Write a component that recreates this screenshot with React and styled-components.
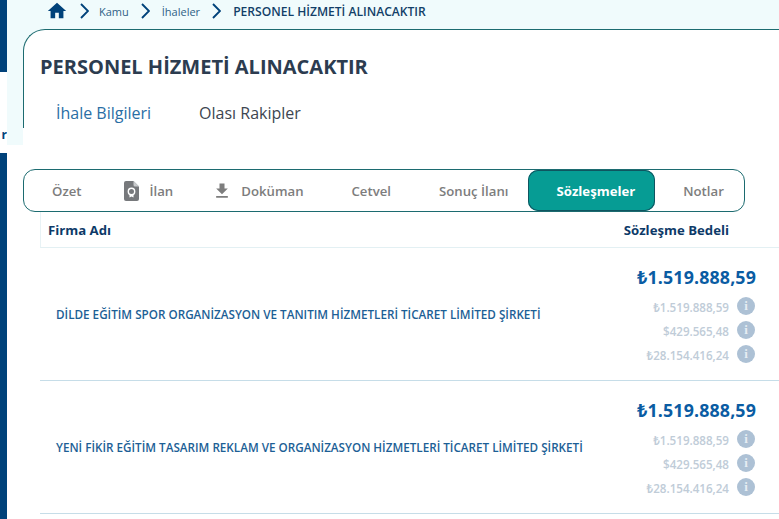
import React from 'react'
import styled, { createGlobalStyle } from 'styled-components'
import { MdFileDownload, MdHome } from 'react-icons/md'

const navy = '#00427a'
const pale = '#f0fbfc'
const teal = '#1c6b70'

const rows = [
  {
    name: 'DİLDE EĞİTİM SPOR ORGANİZASYON VE TANITIM HİZMETLERİ TİCARET LİMİTED ŞİRKETİ',
  },
  {
    name: 'YENİ FİKİR EĞİTİM TASARIM REKLAM VE ORGANİZASYON HİZMETLERİ TİCARET LİMİTED ŞİRKETİ',
  },
]

const prices = ['₺1.519.888,59', '$429.565,48', '₺28.154.416,24']

const DocIcon = () => (
  <svg width="15" height="20" viewBox="0 0 15 20">
    <path
      d="M2 0h7.5L15 5.5V18a2 2 0 0 1-2 2H2a2 2 0 0 1-2-2V2a2 2 0 0 1 2-2z"
      fill="#77797c"
    />
    <path d="M9.5 0v4a1.5 1.5 0 0 0 1.5 1.5h4z" fill="#c9cbcd" />
    <circle cx="7.5" cy="10.5" r="3.2" fill="none" stroke="#fff" strokeWidth="1.4" />
    <path d="M5.5 13.5v3l2-1 2 1v-3" fill="#fff" />
  </svg>
)

const ChevronIcon = ({ wide }) => (
  <Chevron wide={wide} width="9" height="16" viewBox="0 0 9 16">
    <path d="M1 1l7 7-7 7" fill="none" stroke={navy} strokeWidth="1.9" />
  </Chevron>
)

const InfoIcon = () => (
  <InfoBadge>
    <span>i</span>
  </InfoBadge>
)

export default function App() {
  return (
    <Page>
      <GlobalStyle />
      <Sidebar>
        <SideBlock size="72px" />
        <SideGap>r</SideGap>
        <SideBlock size="366px" />
      </Sidebar>
      <Main>
        <Breadcrumb>
          <HomeLink>
            <MdHome size={22} />
          </HomeLink>
          <ChevronIcon />
          <Crumb>Kamu</Crumb>
          <ChevronIcon wide />
          <Crumb>İhaleler</Crumb>
          <ChevronIcon wide />
          <Crumb current>PERSONEL HİZMETİ ALINACAKTIR</Crumb>
        </Breadcrumb>
        <Shell>
          <Gutter />
          <Panel>
            <HeadBack>
              <Head>
                <Title>PERSONEL HİZMETİ ALINACAKTIR</Title>
                <Tabs>
                  <Tab active>İhale Bilgileri</Tab>
                  <Tab>Olası Rakipler</Tab>
                </Tabs>
              </Head>
            </HeadBack>
            <SegmentBar>
              <Segment>Özet</Segment>
              <Segment lead={22} gap={11}>
                <DocIcon />
                İlan
              </Segment>
              <Segment lead={19} gap={9}>
                <MdFileDownload size={20} />
                Doküman
              </Segment>
              <Segment>Cetvel</Segment>
              <Segment>Sonuç İlanı</Segment>
              <Segment active>Sözleşmeler</Segment>
              <Segment>Notlar</Segment>
            </SegmentBar>
            <Table>
              <TableHead>
                <span>Firma Adı</span>
                <span>Sözleşme Bedeli</span>
              </TableHead>
              {rows.map(row => (
                <Row key={row.name}>
                  <FirmName>{row.name}</FirmName>
                  <Amounts>
                    <BigAmount>₺1.519.888,59</BigAmount>
                    {prices.map(price => (
                      <SubAmount key={price}>
                        {price}
                        <InfoIcon />
                      </SubAmount>
                    ))}
                  </Amounts>
                </Row>
              ))}
            </Table>
          </Panel>
        </Shell>
      </Main>
    </Page>
  )
}

const GlobalStyle = createGlobalStyle`
  html, body {
    margin: 0;
    padding: 0;
    background: #fff;
    overflow: hidden;
  }
  body {
    font-family: "Open Sans", "Noto Sans", sans-serif;
  }
`

const Page = styled.div`
  display: flex;
  width: 779px;
  height: 519px;
  overflow: hidden;
`

const Sidebar = styled.aside`
  flex: 0 0 7px;
  display: flex;
  flex-direction: column;
`

const SideBlock = styled.div`
  flex: 0 0 ${props => props.size};
  background: ${navy};
`

const SideGap = styled.div`
  flex: 0 0 81px;
  box-sizing: border-box;
  padding-top: 55px;
  font-size: 12px;
  line-height: 16px;
  font-weight: 700;
  color: ${navy};
  text-align: right;
  overflow: hidden;
`

const Main = styled.main`
  flex: 1;
  min-width: 0;
  display: flex;
  flex-direction: column;
`

const Breadcrumb = styled.nav`
  flex: 0 0 29px;
  display: flex;
  align-items: center;
  box-sizing: border-box;
  padding: 0 0 7px 39px;
  background: ${pale};
  color: ${navy};
`

const HomeLink = styled.span`
  display: flex;
`

const Chevron = styled.svg`
  flex: none;
  margin: 0 ${props => (props.wide ? '12px' : '10px')} 0 12px;
`

const Crumb = styled.span`
  font-size: ${props => (props.current ? '12.1px' : '11px')};
  line-height: 16px;
  font-weight: ${props => (props.current ? 600 : 400)};
  color: ${props => (props.current ? '#123f68' : '#2f5f86')};
  padding-top: 1px;
  white-space: nowrap;
`

const Shell = styled.div`
  flex: 1;
  display: flex;
  align-items: flex-start;
`

const Gutter = styled.div`
  flex: 0 0 16px;
  height: 116px;
  background: ${pale};
`

const Panel = styled.section`
  flex: 1;
  min-width: 0;
`

const HeadBack = styled.div`
  background: ${pale};
`

const Head = styled.header`
  box-sizing: border-box;
  height: 99px;
  padding: 24px 0 0 16px;
  background: #fff;
  border-top: 1px solid ${teal};
  border-left: 1px solid ${teal};
  border-top-left-radius: 22px;
`

const Title = styled.h1`
  margin: 0;
  font-size: 20px;
  line-height: 26px;
  font-weight: 700;
  color: #2c3c50;
  white-space: nowrap;
`

const Tabs = styled.div`
  display: flex;
  gap: 48px;
  margin-top: 22px;
  padding-left: 16px;
`

const Tab = styled.span`
  font-size: 16px;
  line-height: 22px;
  color: ${props => (props.active ? '#2a6ea5' : '#3d4650')};
`

const SegmentBar = styled.div`
  box-sizing: border-box;
  display: flex;
  align-items: stretch;
  width: 722px;
  height: 43px;
  margin-top: 41px;
  background: #fff;
  border: 1px solid ${teal};
  border-radius: 12px;
`

const Segment = styled.div`
  display: flex;
  align-items: center;
  gap: ${props => props.gap || 0}px;
  padding: 0 20px 0 ${props => props.lead || 28}px;
  font-size: 13.2px;
  font-weight: ${props => (props.active ? 700 : 600)};
  color: ${props => (props.active ? '#fff' : '#7d7d7d')};
  background: ${props => (props.active ? '#069c94' : 'transparent')};
  border-radius: ${props => (props.active ? '10px' : '0')};
  box-shadow: ${props => (props.active ? `inset 0 0 0 1px #0f5560` : 'none')};
  white-space: nowrap;
`

const Table = styled.div`
  margin-left: 17px;
`

const TableHead = styled.div`
  box-sizing: border-box;
  display: flex;
  justify-content: space-between;
  align-items: center;
  height: 36px;
  padding: 0 50px 0 7px;
  font-size: 13.2px;
  font-weight: 700;
  color: #0d3a68;
  border-left: 1px solid #e8f2f5;
  border-bottom: 1px solid #e3f0f3;
`

const Row = styled.div`
  box-sizing: border-box;
  display: flex;
  justify-content: space-between;
  align-items: center;
  height: 133px;
  padding: 0 24px 1px 16px;
  border-bottom: 1px solid #c6dde8;
`

const FirmName = styled.div`
  font-size: 11.7px;
  line-height: 16px;
  font-weight: 600;
  color: #1d5f96;
  white-space: nowrap;
`

const Amounts = styled.div`
  display: flex;
  flex-direction: column;
  align-items: flex-end;
  padding-top: 5px;
`

const BigAmount = styled.div`
  font-size: 17.8px;
  line-height: 24px;
  font-weight: 700;
  letter-spacing: 0.15px;
  color: #0a5ca3;
  margin: 0 -1px 7px 0;
`

const SubAmount = styled.div`
  display: flex;
  align-items: center;
  gap: 8px;
  height: 24px;
  font-size: 11.6px;
  font-weight: 600;
  color: #c0ccd8;
`

const InfoBadge = styled.span`
  display: flex;
  align-items: center;
  justify-content: center;
  width: 18px;
  height: 18px;
  border-radius: 50%;
  margin-top: -4px;
  background: #adc1d5;
  color: #e6edf3;
  font-family: "Liberation Serif", serif;
  font-size: 13px;
  font-weight: 700;
`
